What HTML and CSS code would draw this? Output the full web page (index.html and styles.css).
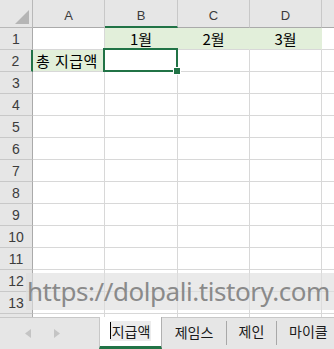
FILE: index.html
```html
<!DOCTYPE html>
<html lang="ko">
<head>
<meta charset="utf-8">
<title>Sheet</title>
<link rel="stylesheet" href="styles.css">
</head>
<body>
<div class="app">
  <div class="sheet">
    <div class="hd corner"><svg class="tri" width="14" height="14" viewBox="0 0 14 14"><polygon points="14,0 14,14 0,14" fill="#b5b5b5"/></svg></div>
    <div class="hd col">A</div>
    <div class="hd col sel-col">B</div>
    <div class="hd col">C</div>
    <div class="hd col">D</div>
    <div class="hd col last"></div>

    <div class="hd row">1</div><div class="c"></div><div class="c fill ctr">1월</div><div class="c fill ctr">2월</div><div class="c fill ctr">3월</div><div class="c last"></div>
    <div class="hd row sel-row">2</div><div class="c fill txt">총 지급액</div><div class="c active"><div class="selbox"><span class="handle"></span></div></div><div class="c"></div><div class="c"></div><div class="c last"></div>
    <div class="hd row">3</div><div class="c"></div><div class="c"></div><div class="c"></div><div class="c"></div><div class="c last"></div>
    <div class="hd row">4</div><div class="c"></div><div class="c"></div><div class="c"></div><div class="c"></div><div class="c last"></div>
    <div class="hd row">5</div><div class="c"></div><div class="c"></div><div class="c"></div><div class="c"></div><div class="c last"></div>
    <div class="hd row">6</div><div class="c"></div><div class="c"></div><div class="c"></div><div class="c"></div><div class="c last"></div>
    <div class="hd row">7</div><div class="c"></div><div class="c"></div><div class="c"></div><div class="c"></div><div class="c last"></div>
    <div class="hd row">8</div><div class="c"></div><div class="c"></div><div class="c"></div><div class="c"></div><div class="c last"></div>
    <div class="hd row">9</div><div class="c"></div><div class="c"></div><div class="c"></div><div class="c"></div><div class="c last"></div>
    <div class="hd row">10</div><div class="c"></div><div class="c"></div><div class="c"></div><div class="c"></div><div class="c last"></div>
    <div class="hd row">11</div><div class="c"></div><div class="c"></div><div class="c"></div><div class="c"></div><div class="c last"></div>
    <div class="hd row">12</div><div class="c"></div><div class="c"></div><div class="c"></div><div class="c"></div><div class="c last"></div>
    <div class="hd row">13</div><div class="c"></div><div class="c"></div><div class="c"></div><div class="c"></div><div class="c last"></div>
    <div class="hd row"></div><div class="c"></div><div class="c"></div><div class="c"></div><div class="c"></div><div class="c last"></div>

    <div class="watermark">https://dolpali.tistory.com</div>
  </div>
  <div class="tabs">
    <div class="nav">
      <svg width="6" height="9" viewBox="0 0 6 9"><polygon points="6,0 6,9 0,4.5" fill="#c4c4c4"/></svg>
      <svg width="6" height="9" viewBox="0 0 6 9"><polygon points="0,0 0,9 6,4.5" fill="#c4c4c4"/></svg>
    </div>
    <div class="tab current"><span class="editing"><span class="caret"></span>지급액</span></div>
    <div class="tab t2">제임스</div>
    <div class="tab t3">제인</div>
    <div class="tab t4">마이클</div>
  </div>
</div>
</body>
</html>
```
FILE: styles.css
```css
html, body {
  margin: 0;
  padding: 0;
  background: #ffffff;
}
.app {
  width: 334px;
  height: 349px;
  overflow: hidden;
  display: flex;
  flex-direction: column;
  font-family: "Noto Sans CJK KR", "Noto Sans", sans-serif;
}
.sheet {
  position: relative;
  height: 322px;
  overflow: hidden;
  display: grid;
  grid-template-columns: 33px 72px 73px 72px 72px 1fr;
  grid-template-rows: 28px repeat(14, 22px);
}
.sheet > div {
  box-sizing: border-box;
}
.hd {
  background: #e6e6e6;
  color: #3c3c3c;
  font-family: "Liberation Sans", Arial, sans-serif;
  font-size: 13px;
  display: flex;
  align-items: center;
  justify-content: center;
}
.corner {
  border-right: 1px solid #b8b8b8;
  border-bottom: 1px solid #b8b8b8;
  position: relative;
}
.tri {
  position: absolute;
  right: 3px;
  bottom: 3px;
}
.col {
  border-right: 1px solid #c8c8c8;
  border-bottom: 1px solid #aaaaaa;
  padding-top: 4px;
}
.col.last {
  border-right: none;
}
.sel-col {
  border-bottom: 2px solid #217346;
}
.row {
  border-right: 1px solid #aaaaaa;
  border-bottom: 1px solid #c8c8c8;
  font-size: 14px;
  padding-top: 1px;
}
.sel-row {
  border-right: 2px solid #217346;
}
.c {
  border-right: 1px solid #d8d8d8;
  border-bottom: 1px solid #d8d8d8;
  font-size: 15px;
  color: #000;
  display: flex;
  align-items: center;
  white-space: nowrap;
}
.c.last {
  border-right: none;
}
.fill {
  background: #e2efda;
}
.ctr {
  justify-content: center;
  border-right-color: #e2efda;
}
.txt {
  padding-left: 3px;
  letter-spacing: 0.5px;
}
.active {
  position: relative;
}
.selbox {
  position: absolute;
  left: -2px;
  top: -2px;
  width: 75px;
  height: 24px;
  border: 2px solid #217346;
  box-sizing: border-box;
  z-index: 2;
}
.handle {
  position: absolute;
  right: -5px;
  bottom: -5px;
  width: 6px;
  height: 6px;
  background: #217346;
  border: 1px solid #ffffff;
  box-sizing: content-box;
}
.watermark {
  position: absolute;
  left: 26px;
  right: 0;
  top: 273px;
  height: 37px;
  background: rgba(222, 222, 222, 0.65);
  color: #8a8a8a;
  font-family: "Noto Sans", "Open Sans", sans-serif;
  font-size: 26px;
  letter-spacing: -0.45px;
  line-height: 36px;
  padding-left: 1px;
  white-space: nowrap;
  z-index: 3;
}
.tabs {
  flex: 1;
  display: flex;
  background: #e6e6e6;
  border-top: 1px solid #c8c8c8;
  font-size: 14px;
  color: #1a1a1a;
}
.nav {
  width: 99px;
  display: flex;
  align-items: center;
  gap: 23px;
  padding-left: 25px;
  box-sizing: border-box;
}
.tab {
  display: flex;
  align-items: center;
  justify-content: center;
  box-sizing: border-box;
}
.current {
  width: 63px;
  margin-top: -1px;
  background: #ffffff;
  border-left: 1px solid #c8c8c8;
  border-right: 1px solid #b0b0b0;
  border-bottom: 3px solid #217346;
  padding-bottom: 2px;
}
.editing {
  background: #ececec;
  display: flex;
  align-items: center;
  padding-right: 1px;
}
.caret {
  display: inline-block;
  width: 1px;
  height: 17px;
  background: #000;
  margin-right: 1px;
}
.t2 {
  width: 64px;
  padding-bottom: 4px;
}
.t3 {
  width: 50px;
  padding-bottom: 4px;
  border-left: 1px solid #a8a8a8;
  margin: 3px 0 4px;
}
.t4 {
  justify-content: flex-start;
  padding-left: 12px;
  padding-bottom: 4px;
  border-left: 1px solid #a8a8a8;
  margin: 3px 0 4px;
}
```
